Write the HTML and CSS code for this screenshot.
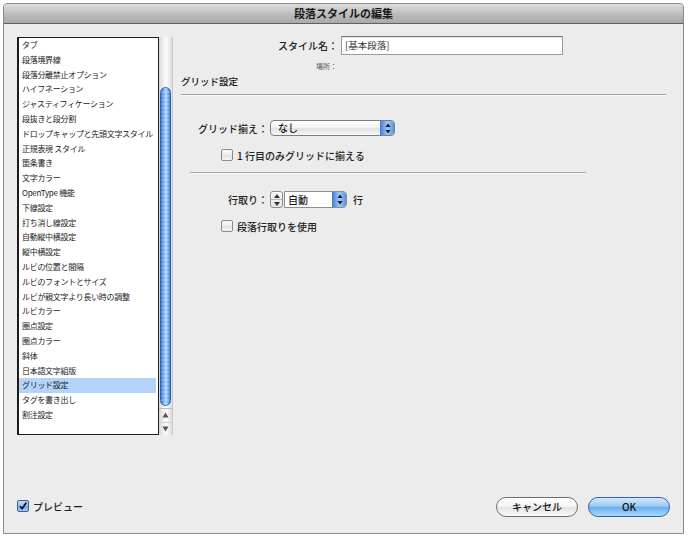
FILE: index.html
```html
<!DOCTYPE html>
<html lang="ja">
<head>
<meta charset="utf-8">
<title>段落スタイルの編集</title>
<link rel="stylesheet" href="styles.css">
</head>
<body>
<div class="window">
  <div class="titlebar">段落スタイルの編集</div>
  <div class="content">
    <div class="main">
      <div class="listbox">
        <ul class="list">
          <li>タブ</li>
          <li>段落境界線</li>
          <li>段落分離禁止オプション</li>
          <li>ハイフネーション</li>
          <li>ジャスティフィケーション</li>
          <li>段抜きと段分割</li>
          <li>ドロップキャップと先頭文字スタイル</li>
          <li>正規表現 スタイル</li>
          <li>箇条書き</li>
          <li>文字カラー</li>
          <li>OpenType 機能</li>
          <li>下線設定</li>
          <li>打ち消し線設定</li>
          <li>自動縦中横設定</li>
          <li>縦中横設定</li>
          <li>ルビの位置と間隔</li>
          <li>ルビのフォントとサイズ</li>
          <li>ルビが親文字より長い時の調整</li>
          <li>ルビカラー</li>
          <li>圏点設定</li>
          <li>圏点カラー</li>
          <li>斜体</li>
          <li>日本語文字組版</li>
          <li class="selected">グリッド設定</li>
          <li>タグを書き出し</li>
          <li>割注設定</li>
        </ul>
        <div class="scrollbar">
          <div class="track"><div class="thumb"></div></div>
          <div class="arrows">
            <span class="arrow"><svg viewBox="0 0 7 6" width="7" height="6"><path d="M3.5 0.5 L6.5 5.5 L0.5 5.5 Z" fill="#555"/></svg></span>
            <span class="arrow"><svg viewBox="0 0 7 6" width="7" height="6"><path d="M0.5 0.5 L6.5 0.5 L3.5 5.5 Z" fill="#555"/></svg></span>
          </div>
        </div>
      </div>
      <div class="pane">
        <div class="name-row">
          <span class="name-label">スタイル名：</span>
          <div class="textfield">[基本段落]</div>
        </div>
        <div class="place-row">場所：</div>
        <div class="section-title">グリッド設定</div>
        <div class="rule"></div>
        <div class="group">
          <div class="field-row grid-row">
            <span class="field-label">グリッド揃え：</span>
            <div class="popup">
              <span class="popup-text">なし</span>
              <span class="popup-cap"><svg viewBox="0 0 6 11" width="6" height="11"><path d="M3 0.5 L5.5 4 L0.5 4 Z M0.5 7 L5.5 7 L3 10.5 Z" fill="#0e1a33"/></svg></span>
            </div>
          </div>
          <div class="check-row first-check">
            <span class="checkbox"></span>
            <span class="check-label">1 行目のみグリッドに揃える</span>
          </div>
          <div class="separator"></div>
          <div class="field-row leading-row">
            <span class="field-label">行取り：</span>
            <div class="stepper">
              <span class="step"><svg viewBox="0 0 6 4" width="6" height="4"><path d="M3 0 L6 4 L0 4 Z" fill="#333"/></svg></span>
              <span class="step"><svg viewBox="0 0 6 4" width="6" height="4"><path d="M0 0 L6 0 L3 4 Z" fill="#333"/></svg></span>
            </div>
            <div class="combo">
              <span class="combo-text">自動</span>
              <span class="combo-cap"><svg viewBox="0 0 6 11" width="6" height="11"><path d="M3 0.5 L5.5 4 L0.5 4 Z M0.5 7 L5.5 7 L3 10.5 Z" fill="#0e1a33"/></svg></span>
            </div>
            <span class="unit">行</span>
          </div>
          <div class="check-row second-check">
            <span class="checkbox"></span>
            <span class="check-label">段落行取りを使用</span>
          </div>
        </div>
      </div>
    </div>
    <div class="footer">
      <div class="preview">
        <span class="checkbox checked"><svg viewBox="0 0 12 12" width="12" height="12"><path d="M2.5 6.2 L5 9.2 L10 1.8" fill="none" stroke="#111" stroke-width="2"/></svg></span>
        <span class="check-label">プレビュー</span>
      </div>
      <div class="buttons">
        <button class="btn cancel">キャンセル</button>
        <button class="btn ok">OK</button>
      </div>
    </div>
  </div>
</div>
</body>
</html>
```

FILE: styles.css
```css
* { box-sizing: border-box; }
html, body { margin: 0; padding: 0; background: #ffffff; }
body {
  font-family: "Noto Sans CJK JP", "Noto Sans", sans-serif;
  color: #1a1a1a;
}
.window {
  margin: 3px 0 0 3px;
  width: 681px;
  height: 531px;
  border: 1px solid #8b8b8b;
  border-radius: 4px 4px 0 0;
  overflow: hidden;
  background: #ececec;
}
.titlebar {
  height: 20px;
  line-height: 18px;
  text-align: center;
  font-size: 11px;
  font-weight: bold;
  color: #1a1a1a;
  background: linear-gradient(#dcdcdc, #b9b9b9 60%, #a9a9a9);
  border-bottom: 1px solid #616161;
}
.content {
  height: 509px;
  display: flex;
  flex-direction: column;
}
.main {
  display: flex;
  padding: 12px 0 0 13px;
}
.listbox {
  display: flex;
  margin-top: 1px;
  height: 398px;
}
.list {
  list-style: none;
  margin: 0;
  padding: 0;
  width: 142px;
  height: 398px;
  background: #fff;
  border: 1px solid #1c1c1c;
  border-left-width: 2px;
  font-size: 8px;
  letter-spacing: -0.3px;
  overflow: hidden;
}
.list li {
  height: 14.8px;
  line-height: 14.8px;
  padding-left: 3px;
  white-space: nowrap;
  color: #222;
}
.list li.selected {
  background: #b3d3fb;
  margin-right: 2px;
}
.scrollbar {
  width: 14px;
  height: 398px;
  display: flex;
  flex-direction: column;
  background: linear-gradient(90deg, #d8d8d8, #f4f4f4 40%, #fafafa 60%, #dcdcdc);
  border-right: 1px solid #c9c9c9;
}
.track {
  flex: 1;
  padding: 50px 1px 2px 1px;
  border-radius: 7px 7px 0 0;
}
.thumb {
  height: 319px;
  border-radius: 6px;
  border: 1px solid #2f62b4;
  background:
    repeating-linear-gradient(0deg, rgba(255,255,255,0.18) 0 2px, rgba(255,255,255,0) 2px 4px),
    linear-gradient(90deg, #3a74d0, #7fb4f2 35%, #b4dafc 55%, #6ea9ee 80%, #3c73cb);
}
.arrows {
  height: 28px;
  display: flex;
  flex-direction: column;
  border-top: 1px solid #bdbdbd;
}
.arrow {
  flex: 1;
  display: flex;
  align-items: center;
  justify-content: center;
}
.arrow + .arrow { border-top: 1px solid #d0d0d0; }

.pane {
  margin-left: 8px;
  width: 485px;
  display: flex;
  flex-direction: column;
}
.name-row {
  display: flex;
  align-items: center;
  height: 19px;
}
.name-label {
  width: 158px;
  text-align: right;
  font-size: 10px;
  font-weight: 500;
  color: #222;
  padding-right: 1px;
}
.textfield {
  margin-left: 2px;
  width: 222px;
  height: 19px;
  border: 1px solid #9c9c9c;
  border-top-color: #777;
  background: #fff;
  font-size: 9.5px;
  line-height: 17px;
  padding-left: 3px;
  color: #333;
  box-shadow: inset 0 1px 1px rgba(0,0,0,0.12);
}
.place-row {
  width: 156px;
  margin-top: 6px;
  text-align: right;
  font-size: 7px;
  line-height: 10px;
  color: #555;
}
.section-title {
  margin-top: 4px;
  font-size: 9.5px;
  font-weight: 500;
  line-height: 13px;
  color: #111;
}
.rule {
  margin-top: 6px;
  height: 2px;
  border-top: 1px solid #9f9f9f;
  border-bottom: 1px solid #fdfdfd;
}
.group {
  padding-left: 16px;
  display: flex;
  flex-direction: column;
}
.field-row {
  display: flex;
  align-items: center;
}
.grid-row { margin-top: 24px; height: 16px; }
.field-label {
  width: 73px;
  padding-right: 2px;
  text-align: right;
  font-size: 10px;
  font-weight: 500;
  color: #222;
}
.popup {
  width: 125px;
  height: 16px;
  display: flex;
  border: 1px solid #7d7d7d;
  border-radius: 4px;
  overflow: hidden;
  background: linear-gradient(#ffffff, #f1f1f1 50%, #e1e1e1 51%, #f6f6f6);
}
.popup-text {
  flex: 1;
  font-size: 10px;
  font-weight: 500;
  line-height: 14px;
  padding-left: 7px;
  color: #1a1a1a;
}
.popup-cap, .combo-cap {
  width: 14px;
  border-left: 1px solid #4a78bd;
  background: linear-gradient(90deg, #4d87d8, #9fcaf6 50%, #5c93dc);
  display: flex;
  align-items: center;
  justify-content: center;
}
.check-row {
  display: flex;
  align-items: center;
  padding-left: 24px;
  height: 12px;
}
.first-check { margin-top: 13px; }
.second-check { margin-top: 12px; }
.checkbox {
  width: 12px;
  height: 12px;
  border: 1px solid #8a8a8a;
  border-radius: 2px;
  background: linear-gradient(#fafafa, #ececec 50%, #e0e0e0 51%, #f6f6f6);
  display: inline-flex;
  align-items: center;
  justify-content: center;
  flex-shrink: 0;
}
.check-label {
  margin-left: 4px;
  font-size: 10px;
  font-weight: 500;
  color: #222;
  white-space: nowrap;
}
.separator {
  margin: 11px 0 0 -7px;
  width: 396px;
  height: 2px;
  border-top: 1px solid #a3a3a3;
  border-bottom: 1px solid #fafafa;
}
.leading-row { margin-top: 17px; height: 17px; }
.stepper {
  width: 13px;
  height: 17px;
  display: flex;
  flex-direction: column;
  border: 1px solid #8d8d8d;
  border-radius: 3px;
  background: linear-gradient(#fdfdfd, #e4e4e4);
}
.step {
  flex: 1;
  display: flex;
  align-items: center;
  justify-content: center;
}
.step + .step { border-top: 1px solid #b5b5b5; }
.combo {
  margin-left: 1px;
  width: 63px;
  height: 17px;
  display: flex;
  border: 1px solid #8d8d8d;
  border-radius: 0 4px 4px 0;
  overflow: hidden;
  background: #fff;
}
.combo-text {
  flex: 1;
  font-size: 10px;
  font-weight: 500;
  line-height: 15px;
  padding-left: 3px;
  color: #1a1a1a;
}
.unit {
  margin-left: 6px;
  font-size: 10px;
  font-weight: 500;
  color: #222;
}
.footer {
  margin-top: 62px;
  height: 20px;
  padding: 0 13px;
  display: flex;
  align-items: center;
  justify-content: space-between;
}
.preview {
  display: flex;
  align-items: center;
  margin-top: -2px;
}
.checkbox.checked {
  border-color: #355f9f;
  background: linear-gradient(#c5def8, #8cbcee 50%, #6aa4e6 51%, #a6d0f8);
}
.checkbox.checked svg { display: block; margin-top: -1px; }
.buttons {
  display: flex;
  gap: 10px;
}
.btn {
  width: 82px;
  height: 20px;
  border-radius: 10px;
  font-family: "Noto Sans CJK JP", "Noto Sans", sans-serif;
  font-size: 10px;
  font-weight: 500;
  color: #111;
  padding: 0;
  line-height: 18px;
}
.cancel {
  border: 1px solid #6e6e6e;
  background: linear-gradient(#ffffff, #f3f3f3 50%, #e3e3e3 51%, #fafafa);
}
.ok {
  border: 1px solid #3a62a3;
  background: linear-gradient(#d4e8fb, #9ccbf4 45%, #6aaef0 52%, #a8dafd);
}
```
